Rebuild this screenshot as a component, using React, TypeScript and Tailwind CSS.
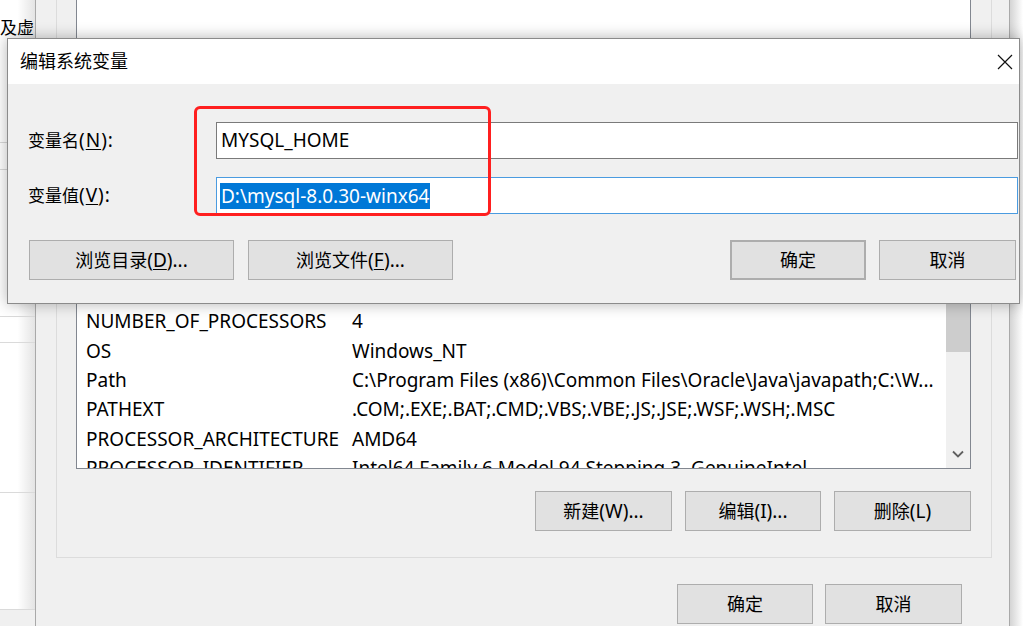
import React from "react";

const rows = [
  ["NUMBER_OF_PROCESSORS", "4"],
  ["OS", "Windows_NT"],
  ["Path", "C:\\Program Files (x86)\\Common Files\\Oracle\\Java\\javapath;C:\\W..."],
  ["PATHEXT", ".COM;.EXE;.BAT;.CMD;.VBS;.VBE;.JS;.JSE;.WSF;.WSH;.MSC"],
  ["PROCESSOR_ARCHITECTURE", "AMD64"],
  ["PROCESSOR_IDENTIFIER", "Intel64 Family 6 Model 94 Stepping 3, GenuineIntel"],
];

function Btn({ children, className = "" }: { children: React.ReactNode; className?: string }) {
  return (
    <div
      className={`flex h-[40px] items-center justify-center whitespace-nowrap border border-[#adadad] bg-[#e1e1e1] text-[18px] text-black ${className}`}
    >
      {children}
    </div>
  );
}

// latin part of a label, YaHei's latin glyphs run wider than the CJK face's
function Lat({ children }: { children: React.ReactNode }) {
  return <span className="text-[19px]">{children}</span>;
}

function Mn({ c }: { c: string }) {
  return <span className="underline underline-offset-2">{c}</span>;
}

// window that sits behind the edit dialog
function EnvWindow() {
  return (
    <div className="flex h-[626px] w-[975px] flex-col border-x border-[#a9a9a9] bg-[#f0f0f0] pl-[20px] pr-[17px]">
      <div className="flex flex-col border-x border-b border-[#dcdcdc] pl-[19px] pr-[20px] pb-[26px]">
        <div className="flex h-[469px] border-x border-b border-[#828790] bg-white">
          <div className="flex-1 overflow-hidden pl-[9px] pt-[307px] text-[19px] text-black">
            {rows.map(([k, v]) => (
              <div key={k} className="flex h-[29.4px] items-center whitespace-nowrap leading-none">
                <span className="w-[266px] shrink-0">{k}</span>
                <span>{v}</span>
              </div>
            ))}
          </div>
          <div className="flex w-[24px] flex-col">
            <div className="h-[40px] bg-white" />
            <div className="h-[160px] bg-[#f0f0f0]" />
            <div className="h-[152px] bg-[#cdcdcd]" />
            <div className="flex flex-1 items-end justify-center bg-[#f0f0f0] pb-[10px]">
              <svg width="12" height="8" viewBox="0 0 12 8" fill="none">
                <path d="M1 1.5l5 5 5-5" stroke="#606060" strokeWidth="1.8" />
              </svg>
            </div>
          </div>
        </div>
        <div className="mt-[22px] flex justify-end gap-[13px]">
          <Btn className="w-[137px]">
            新建<Lat>(W)...</Lat>
          </Btn>
          <Btn className="w-[136px]">
            编辑<Lat>(I)...</Lat>
          </Btn>
          <Btn className="w-[137px]">
            删除<Lat>(L)</Lat>
          </Btn>
        </div>
      </div>
      <div className="mt-[26px] flex justify-end gap-[12px] pr-[30px]">
        <Btn className="w-[136px]">确定</Btn>
        <Btn className="w-[137px]">取消</Btn>
      </div>
    </div>
  );
}

function EditDialog() {
  return (
    <div className="absolute left-[7px] top-[38px] flex h-[266px] w-[1013px] flex-col border border-[#8b8b8b] shadow-[0_0_14px_rgba(0,0,0,0.3)]">
      <div className="flex h-[45px] items-center justify-between bg-white pl-[12px] pr-[6px]">
        <span className="text-[18px] text-black">编辑系统变量</span>
        <svg width="16" height="16" viewBox="0 0 16 16" fill="none">
          <path d="M1 1l14 14M15 1L1 15" stroke="#111" strokeWidth="1.2" />
        </svg>
      </div>
      <div className="flex flex-1 flex-col bg-[#f0f0f0] pl-[20px] pr-[1px] pt-[38px]">
        <div className="flex h-[37px] items-center">
          <span className="w-[188px] whitespace-nowrap text-[17px] text-black">
            变量名
            <span className="text-[19px] tracking-[1px]">
              (<Mn c="N" />):
            </span>
          </span>
          <div className="flex h-full flex-1 items-center border border-[#7a7a7a] bg-white pl-[4px] text-[19px] text-black">
            MYSQL_HOME
          </div>
        </div>
        <div className="mt-[18px] flex h-[37px] items-center">
          <span className="w-[188px] whitespace-nowrap text-[17px] text-black">
            变量值
            <span className="text-[19px] tracking-[1px]">
              (<Mn c="V" />):
            </span>
          </span>
          <div className="flex h-full flex-1 items-center border border-[#4a9be0] bg-white pl-[3px] text-[19px]">
            <span className="bg-[#0078d7] px-[1px] leading-[26px] text-white">D:\mysql-8.0.30-winx64</span>
          </div>
        </div>
        <div className="mt-[26px] flex items-center pl-[1px] pr-[2px]">
          <Btn className="w-[205px]">
            浏览目录
            <Lat>
              (<Mn c="D" />)...
            </Lat>
          </Btn>
          <Btn className="ml-[14px] w-[205px]">
            浏览文件
            <Lat>
              (<Mn c="F" />)...
            </Lat>
          </Btn>
          <div className="flex-1" />
          <Btn className="w-[136px] border-2 border-[#0078d7]">确定</Btn>
          <Btn className="ml-[13px] w-[137px]">取消</Btn>
        </div>
      </div>
    </div>
  );
}

export default function App() {
  return (
    <div className="relative h-[626px] w-[1023px] overflow-hidden bg-white font-['Noto_Sans','Noto_Sans_CJK_SC',sans-serif]">
      <div className="flex h-full">
        {/* strip of the system properties window on the far left */}
        <div className="flex w-[35px] flex-col overflow-hidden bg-gradient-to-r from-white via-white to-[#e4e4e4]">
          <div className="h-[143px] border-b border-[#dadada] pt-[19px] text-[17px] leading-none whitespace-nowrap text-black">
            及虚
          </div>
          <div className="h-[27px] border-b border-[#dadada]" />
          <div className="h-[147px] border-b border-[#dadada]" />
          <div className="h-[26px] border-b border-[#dadada]" />
          <div className="h-[150px] border-b border-[#dadada]" />
          <div className="h-[117px] border-b border-[#dadada]" />
          <div className="flex-1 bg-[#f0f0f0]" />
        </div>
        <EnvWindow />
        <div className="flex-1 bg-gradient-to-r from-[#d4d4d4] to-white" />
      </div>
      <EditDialog />
      {/* red annotation box */}
      <div className="absolute left-[194px] top-[106px] h-[110px] w-[297px] rounded-[6px] border-[3px] border-[#ff1f1f]" />
    </div>
  );
}
